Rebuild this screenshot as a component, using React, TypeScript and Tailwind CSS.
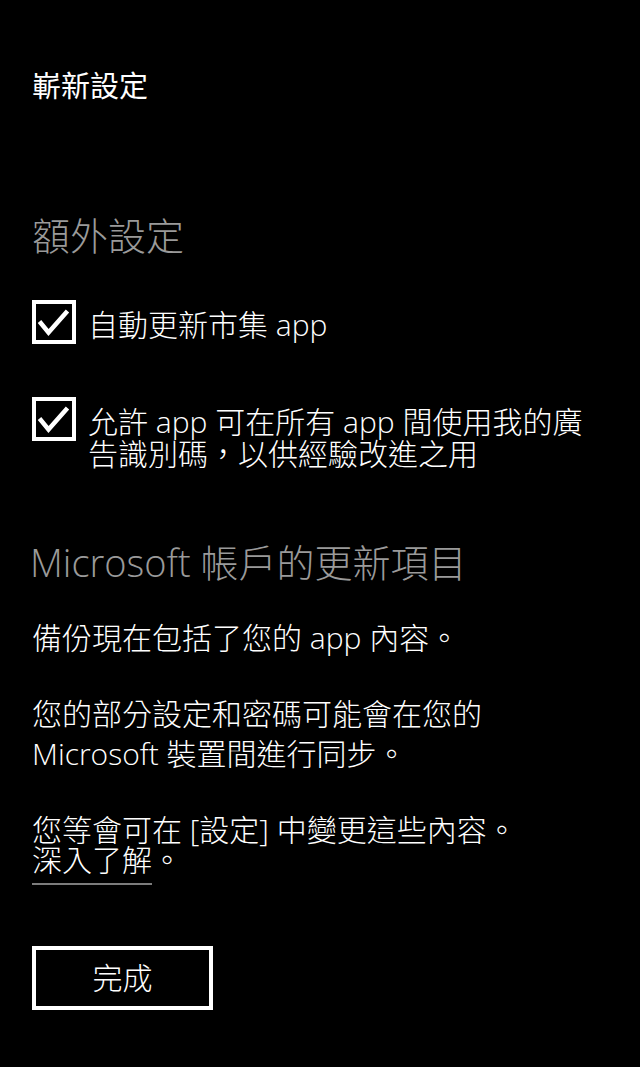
import React from "react";

const cjk = "font-['Open_Sans','Noto_Sans_CJK_TC',sans-serif]";

function CheckBox({ children }: { children: React.ReactNode }) {
  return (
    <div className="flex items-start gap-[12px]">
      <div className="w-[44px] h-[44px] shrink-0 border-[4px] border-white">
        <svg viewBox="0 0 36 36" className="w-[36px] h-[36px]" fill="none" stroke="white" strokeWidth="4.5" strokeLinecap="butt" strokeLinejoin="miter">
          <path d="M3.5 17.5 L12.5 28.5 L31.5 7" />
        </svg>
      </div>
      <p className="mt-[9px] text-[30px] leading-[32px] font-light text-white">{children}</p>
    </div>
  );
}

export default function App() {
  return (
    <div className={`min-h-[1067px] w-[640px] bg-black px-8 pt-[70px] ${cjk}`}>
      <h1 className="text-[29px] leading-[32px] font-normal text-white">嶄新設定</h1>

      <h2 className="mt-[111px] text-[38px] leading-[44px] font-light text-[#9a9a9a]">額外設定</h2>

      <div className="mt-[43px] flex flex-col gap-[53px]">
        <CheckBox>自動更新市集 app</CheckBox>
        <CheckBox>允許 app 可在所有 app 間使用我的廣告識別碼，以供經驗改進之用</CheckBox>
      </div>

      <h2 className="mt-[70px] -ml-[2px] text-[38px] leading-[44px] font-light text-[#9a9a9a]">
        Microsoft 帳戶的更新項目
      </h2>

      <div className="mt-[38px] flex flex-col gap-[44px] text-[30px] leading-[32px] font-light text-white">
        <p>備份現在包括了您的 app 內容。</p>
        <div>
          <p>您的部分設定和密碼可能會在您的</p>
          <p className="mt-[8px]">Microsoft 裝置間進行同步。</p>
        </div>
        <div>
          <p>您等會可在 [設定] 中變更這些內容。</p>
          <p className="leading-[28px]">
            <span className="underline decoration-[#7c7c7c] decoration-2 underline-offset-[12px]">深入了解</span>。
          </p>
        </div>
      </div>

      <button className="mt-[72px] w-[181px] h-[64px] border-[4px] border-white text-[30px] leading-[32px] font-light text-white flex items-center justify-center">
        完成
      </button>
    </div>
  );
}
